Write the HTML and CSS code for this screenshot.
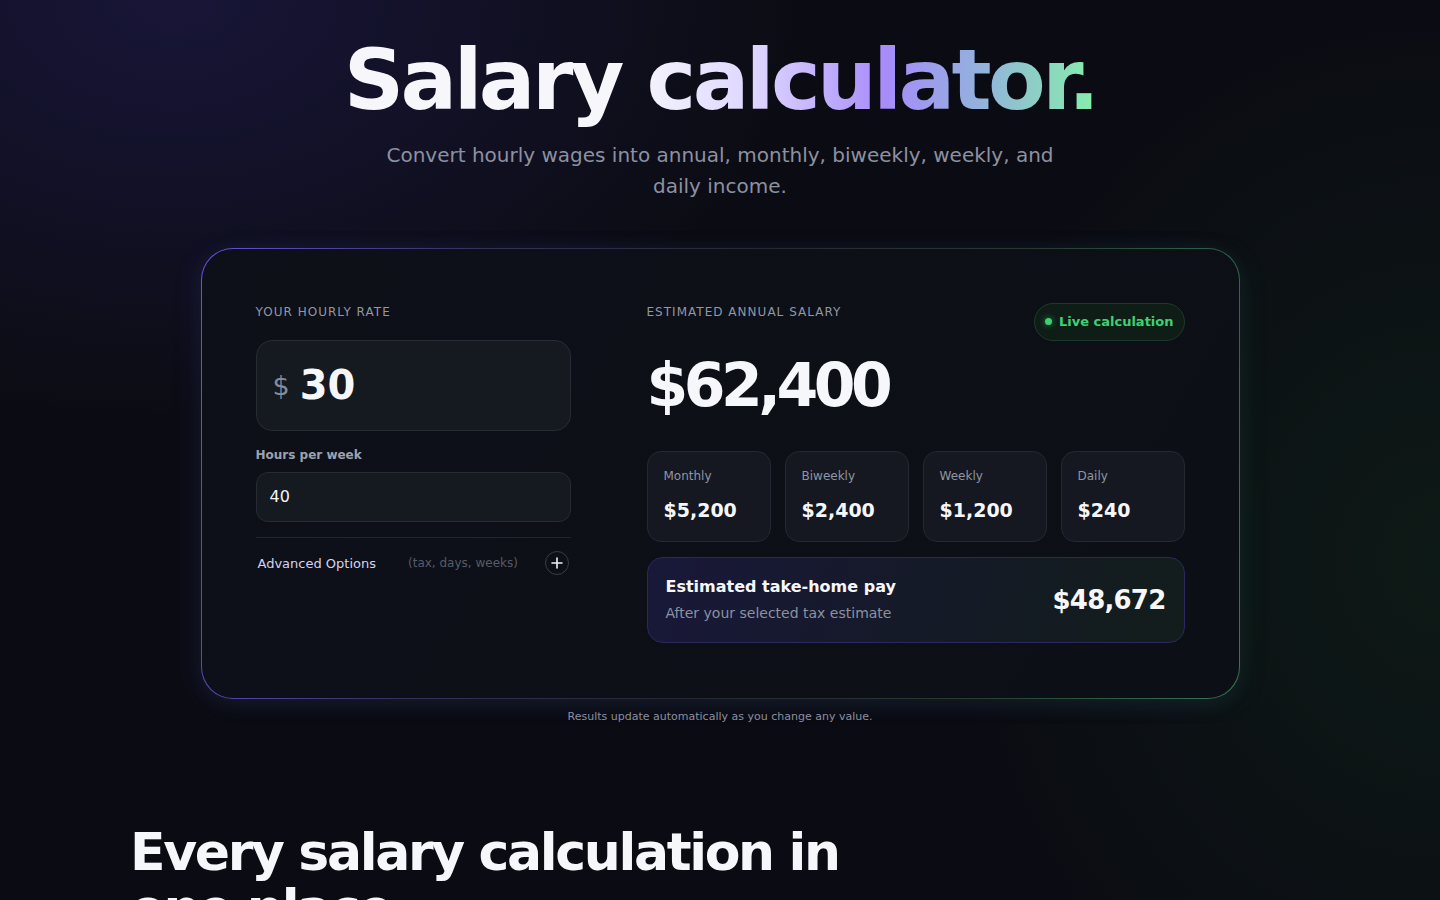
FILE: index.html
```html
<!DOCTYPE html>
<html lang="en">
<head>
<meta charset="utf-8">
<title>Salary calculator</title>
<link rel="stylesheet" href="styles.css">
</head>
<body>
<main class="page">
  <header class="hero">
    <h1 class="hero-title">Salary calculator.</h1>
    <p class="hero-sub">Convert hourly wages into annual, monthly, biweekly, weekly, and daily income.</p>
  </header>

  <section class="calc-card">
    <div class="calc-inputs">
      <div class="eyebrow">YOUR HOURLY RATE</div>
      <div class="rate-box">
        <span class="rate-currency">$</span>
        <span class="rate-value">30</span>
      </div>
      <div class="field-label">Hours per week</div>
      <div class="hours-box">40</div>
      <div class="divider"></div>
      <div class="adv-row">
        <span class="adv-title">Advanced Options</span>
        <span class="adv-hint">(tax, days, weeks)</span>
        <span class="adv-btn">
          <svg width="12" height="12" viewBox="0 0 12 12"><path d="M6 1v10M1 6h10" stroke="#f2f3f7" stroke-width="1.6" stroke-linecap="round"/></svg>
        </span>
      </div>
    </div>

    <div class="calc-results">
      <div class="results-head">
        <div class="eyebrow">ESTIMATED ANNUAL SALARY</div>
        <div class="live-badge"><span class="live-dot"></span>Live calculation</div>
      </div>
      <div class="annual">$62,400</div>
      <div class="stats">
        <div class="stat"><div class="stat-label">Monthly</div><div class="stat-value">$5,200</div></div>
        <div class="stat"><div class="stat-label">Biweekly</div><div class="stat-value">$2,400</div></div>
        <div class="stat"><div class="stat-label">Weekly</div><div class="stat-value">$1,200</div></div>
        <div class="stat"><div class="stat-label">Daily</div><div class="stat-value">$240</div></div>
      </div>
      <div class="takehome">
        <div class="takehome-text">
          <div class="takehome-title">Estimated take-home pay</div>
          <div class="takehome-sub">After your selected tax estimate</div>
        </div>
        <div class="takehome-value">$48,672</div>
      </div>
    </div>
  </section>

  <p class="note">Results update automatically as you change any value.</p>

  <section class="features">
    <h2 class="features-title">Every salary calculation in<br>one place.</h2>
  </section>
</main>
</body>
</html>
```

FILE: styles.css
```css
* { box-sizing: border-box; }
html, body { margin: 0; padding: 0; }
body {
  font-family: "DejaVu Sans", "Liberation Sans", sans-serif;
  color: #f4f5f9;
  min-height: 900px;
  background:
    radial-gradient(ellipse 900px 600px at 12% 0%, rgba(40, 32, 100, 0.45), rgba(40, 32, 100, 0) 70%),
    radial-gradient(ellipse 700px 800px at 100% 60%, rgba(20, 60, 30, 0.28), rgba(20, 60, 30, 0) 70%),
    #0b0c13;
  overflow: hidden;
}
.page {
  width: 1180px;
  margin: 0 auto;
  display: flex;
  flex-direction: column;
  align-items: center;
}
.hero {
  padding-top: 32px;
  display: flex;
  flex-direction: column;
  align-items: center;
}
.hero-title {
  margin: 0;
  font-size: 84px;
  line-height: 1.15;
  font-weight: 700;
  letter-spacing: -0.043em;
  background: linear-gradient(90deg, #f7f7fb 0%, #f7f7fb 38%, #ddd5ff 55%, #a78bfa 72%, #93b0de 84%, #86efac 100%);
  -webkit-background-clip: text;
  background-clip: text;
  color: transparent;
}
.hero-sub {
  margin: 11px 0 0;
  width: 700px;
  text-align: center;
  font-size: 20px;
  line-height: 31px;
  color: #8c91a2;
}
.calc-card {
  margin-top: 46px;
  width: 1039px;
  display: grid;
  grid-template-columns: 315px 1fr;
  column-gap: 76px;
  padding: 54px 54px 55px;
  border-radius: 32px;
  border: 1px solid transparent;
  background:
    linear-gradient(120deg, #0d1018, #0c0f15) padding-box,
    linear-gradient(100deg, #6a50e0 0%, #33305a 25%, #262833 50%, #263a30 75%, #2f7a52 100%) border-box;
  box-shadow: -6px 4px 24px rgba(90, 70, 200, 0.12), 6px 4px 24px rgba(40, 140, 80, 0.1);
}
.eyebrow {
  font-size: 12px;
  line-height: 18px;
  letter-spacing: 0.085em;
  color: #9197a7;
}
.calc-inputs { display: flex; flex-direction: column; }
.rate-box {
  margin-top: 19px;
  height: 91px;
  border-radius: 16px;
  background: #151920;
  border: 1px solid #272b34;
  display: flex;
  align-items: center;
  padding: 0 16px;
  gap: 10px;
}
.rate-currency { font-size: 27px; color: #858b9b; }
.rate-value { font-size: 40px; font-weight: 700; color: #f6f7fb; }
.field-label {
  margin-top: 16px;
  font-size: 12px;
  line-height: 16px;
  font-weight: 700;
  color: #9ca2b1;
}
.hours-box {
  margin-top: 9px;
  height: 50px;
  border-radius: 12px;
  background: #151920;
  border: 1px solid #272b34;
  display: flex;
  align-items: center;
  padding: 0 13px;
  font-size: 16px;
  color: #f2f3f7;
}
.divider { margin-top: 15px; height: 1px; background: #22252e; }
.adv-row {
  height: 51px;
  display: flex;
  align-items: center;
  padding: 0 2px;
}
.adv-title { font-size: 13px; color: #d4d4f2; }
.adv-hint { margin-left: 32px; font-size: 12px; color: #565b68; }
.adv-btn {
  margin-left: auto;
  width: 24px;
  height: 24px;
  border-radius: 50%;
  border: 1px solid #3a3d48;
  display: flex;
  align-items: center;
  justify-content: center;
}
.calc-results { display: flex; flex-direction: column; }
.results-head {
  display: flex;
  justify-content: space-between;
  align-items: flex-start;
}
.live-badge {
  height: 38px;
  border-radius: 19px;
  padding: 0 10px;
  display: flex;
  align-items: center;
  gap: 7px;
  background: #0f1d17;
  border: 1px solid #1d3a29;
  font-size: 13px;
  font-weight: 700;
  color: #3fd073;
}
.live-dot {
  width: 7px;
  height: 7px;
  border-radius: 50%;
  background: #3fd073;
  box-shadow: 0 0 6px rgba(63, 208, 115, 0.6);
}
.annual {
  margin-top: 12px;
  font-size: 60px;
  line-height: 64px;
  font-weight: 700;
  letter-spacing: -0.075em;
  color: #f6f7fb;
}
.stats {
  margin-top: 34px;
  display: grid;
  grid-template-columns: repeat(4, 1fr);
  gap: 14px;
}
.stat {
  height: 91px;
  border-radius: 14px;
  background: #151820;
  border: 1px solid #242833;
  padding: 16px 16px 0;
}
.stat-label { font-size: 12px; line-height: 16px; color: #8f95a4; }
.stat-value {
  margin-top: 14px;
  font-size: 19px;
  line-height: 24px;
  font-weight: 700;
  color: #f6f7fb;
}
.takehome {
  margin-top: 15px;
  height: 86px;
  border-radius: 16px;
  border: 1px solid #2a2960;
  background: linear-gradient(110deg, #19183a 0%, #151a28 50%, #121d1b 100%);
  display: flex;
  align-items: center;
  justify-content: space-between;
  padding: 0 18px;
}
.takehome-title { font-size: 16px; line-height: 20px; font-weight: 700; color: #f6f7fb; }
.takehome-sub { margin-top: 7px; font-size: 14px; line-height: 18px; color: #8c91a0; }
.takehome-value { font-size: 26px; font-weight: 700; letter-spacing: -0.03em; color: #f6f7fb; }
.note {
  margin: 11px 0 0;
  font-size: 11px;
  line-height: 14px;
  color: #8a8fa0;
}
.features {
  align-self: stretch;
  padding-top: 100px;
}
.features-title {
  margin: 0;
  font-size: 52px;
  line-height: 56px;
  font-weight: 700;
  letter-spacing: -0.045em;
  color: #f6f7fb;
}
```
